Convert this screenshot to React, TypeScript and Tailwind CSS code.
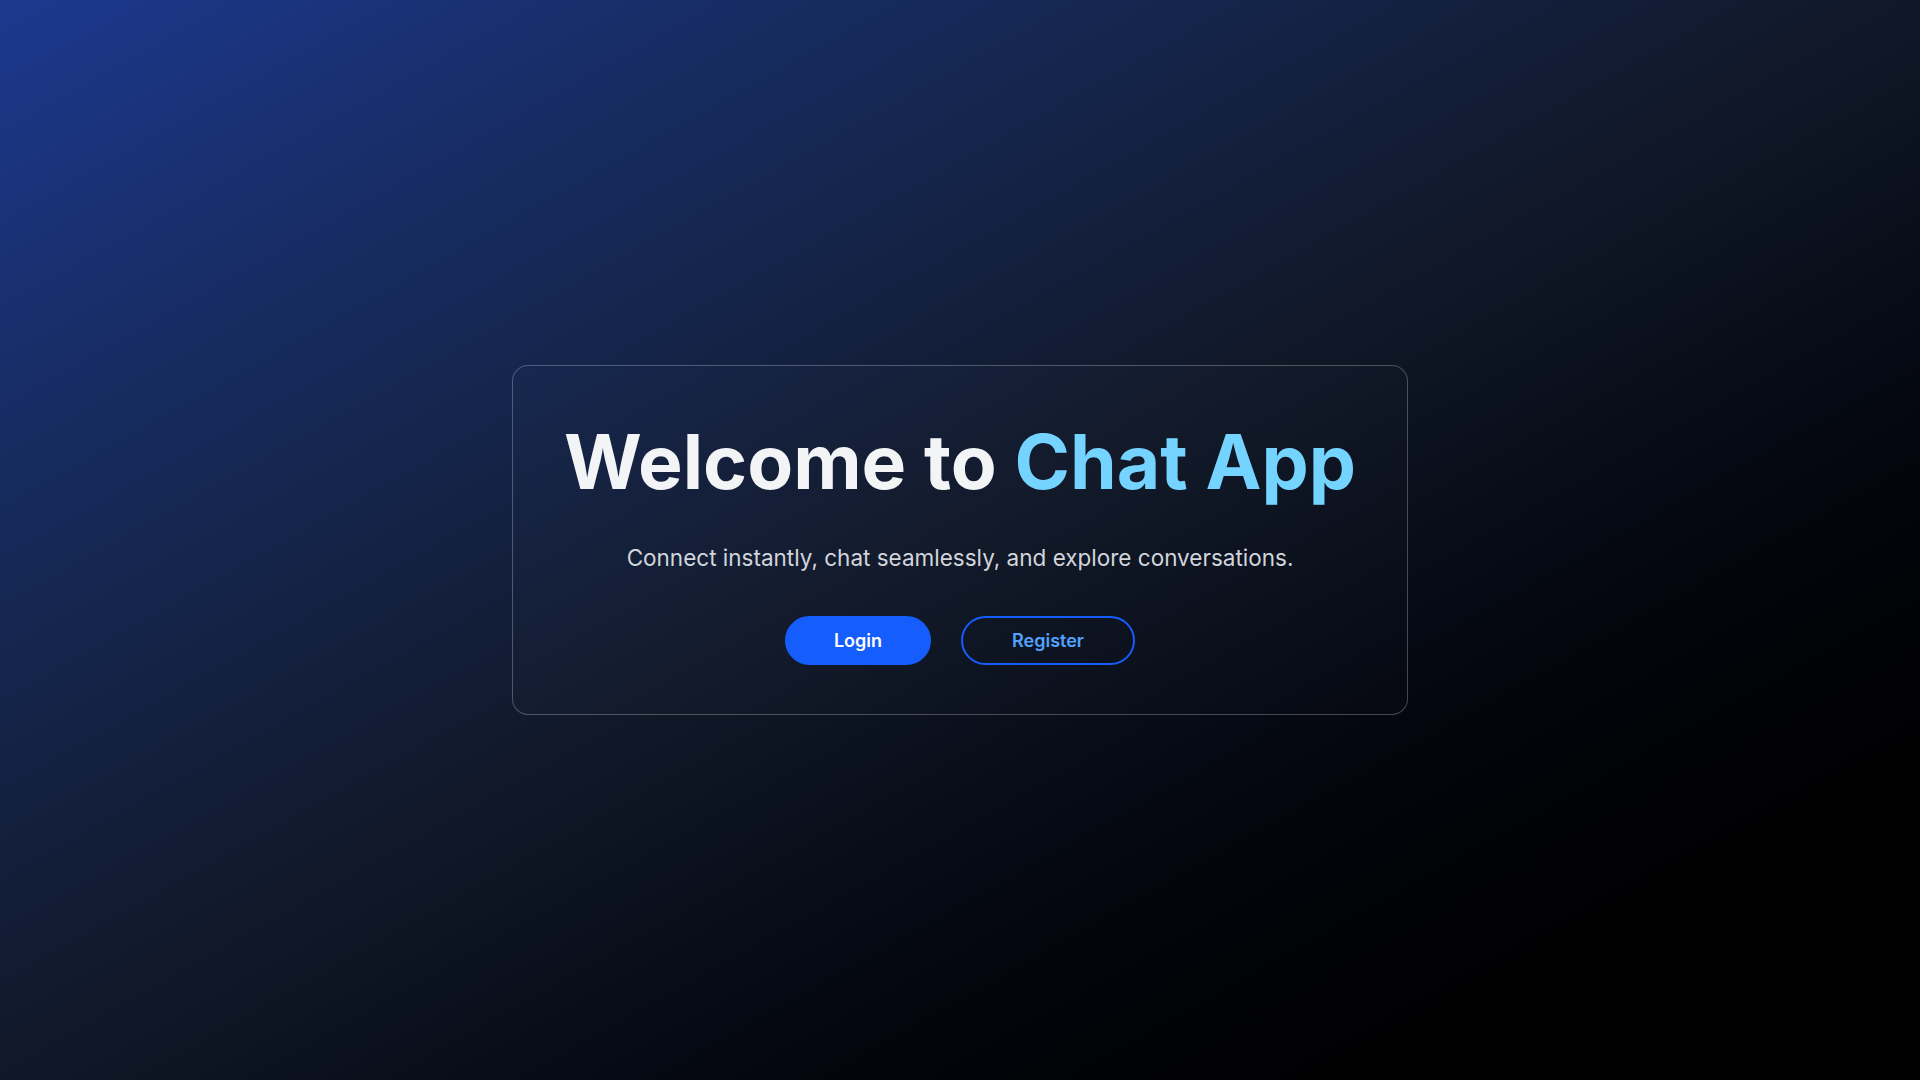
export default function App() {
  return (
    <div
      className="min-h-screen w-full flex items-center justify-center bg-gradient-to-br from-blue-900 via-gray-900 to-black px-4"
      style={{ fontFamily: 'Inter, "Noto Sans", sans-serif' }}
    >
      <div className="w-full max-w-4xl rounded-2xl border border-white/25 bg-white/[0.01] px-10 pt-10 pb-[49px] text-center">
        <h1 className="text-[75px] leading-[1.5] font-bold text-gray-100">
          Welcome to <span className="text-sky-300">Chat App</span>
        </h1>

        <p className="mt-[23px] text-[22.5px] leading-[1.5] text-gray-300">
          Connect instantly, chat seamlessly, and explore conversations.
        </p>

        <div className="mt-[41px] flex items-center justify-center gap-[30px]">
          <button className="h-[49px] w-[146px] rounded-full border-2 border-blue-600 bg-blue-600 text-lg font-semibold text-white">
            Login
          </button>
          <button className="h-[49px] w-[174px] rounded-full border-2 border-blue-600 bg-transparent text-lg font-semibold text-blue-400">
            Register
          </button>
        </div>
      </div>
    </div>
  );
}
